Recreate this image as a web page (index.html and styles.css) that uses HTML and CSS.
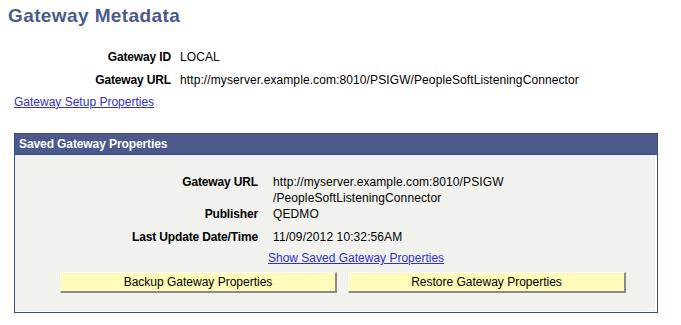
FILE: index.html
```html
<!DOCTYPE html>
<html lang="en">

<head>
    <meta charset="UTF-8">
    <title>Gateway Metadata</title>
    <link rel="stylesheet" href="styles.css">
</head>

<body>
    <div class="page">
        <h1 class="page-title">Gateway Metadata</h1>

        <div class="fields">
            <div class="label">Gateway ID</div>
            <div class="value">LOCAL</div>
            <div class="label">Gateway URL</div>
            <div class="value">http://myserver.example.com:8010/PSIGW/PeopleSoftListeningConnector</div>
        </div>

        <a class="link setup-link" href="#">Gateway Setup Properties</a>

        <div class="panel">
            <div class="panel-header">Saved Gateway Properties</div>
            <div class="panel-body">
                <div class="saved-fields">
                    <div class="label">Gateway URL</div>
                    <div class="value">http://myserver.example.com:8010/PSIGW<br>/PeopleSoftListeningConnector</div>
                    <div class="label">Publisher</div>
                    <div class="value">QEDMO</div>
                    <div class="label row-gap">Last Update Date/Time</div>
                    <div class="value row-gap">11/09/2012 10:32:56AM</div>
                    <div></div>
                    <div class="link-cell"><a class="link" href="#">Show Saved Gateway Properties</a></div>
                </div>
                <div class="buttons">
                    <button class="btn btn-backup" type="button">Backup Gateway Properties</button>
                    <button class="btn btn-restore" type="button">Restore Gateway Properties</button>
                </div>
            </div>
        </div>
    </div>
</body>

</html>
```

FILE: styles.css
```css
body {
    margin: 0;
    background-color: #ffffff;
    font-family: "Liberation Sans", Arial, sans-serif;
    font-size: 12px;
    color: #000;
}

.page {
    padding: 0 8px;
}

.page-title {
    margin: 0;
    padding-top: 5px;
    font-size: 19px;
    line-height: 22px;
    font-weight: bold;
    letter-spacing: 0.4px;
    color: #4b5a8c;
}

.fields {
    display: grid;
    grid-template-columns: 163px auto;
    column-gap: 9px;
    row-gap: 7px;
    margin-top: 22px;
    line-height: 16px;
}

.label {
    text-align: right;
    font-weight: bold;
    letter-spacing: -0.15px;
}

.value {
    letter-spacing: 0.1px;
}

.link {
    color: #3030cc;
    text-decoration: underline;
}

.setup-link {
    display: inline-block;
    margin-top: 6px;
    margin-left: 6px;
    line-height: 16px;
}

.panel {
    margin-top: 23px;
    margin-left: 6px;
    width: 642px;
    border: 1px solid #3a4a86;
}

.panel-header {
    height: 20px;
    line-height: 20px;
    padding-left: 4px;
    background-color: #4b5a8b;
    color: #ffffff;
    font-weight: bold;
    letter-spacing: -0.1px;
    border-bottom: 1px solid #3a4a86;
}

.panel-body {
    background-color: #f1f2ee;
    border-right: 2px solid #ffffff;
    border-bottom: 1px solid #ffffff;
    padding: 19px 0 18px 0;
}

.saved-fields {
    display: grid;
    grid-template-columns: 243px auto;
    column-gap: 15px;
    line-height: 16px;
}

.row-gap {
    margin-top: 7px;
}

.link-cell {
    margin-top: 5px;
    margin-left: -5px;
}

.buttons {
    display: flex;
    gap: 11px;
    margin-top: 6px;
    margin-left: 45px;
}

.btn {
    height: 21px;
    padding: 0;
    background-color: #fffbb8;
    border-top: 1px solid #ffffff;
    border-left: 1px solid #ffffff;
    border-right: 2px solid #8a8a86;
    border-bottom: 2px solid #8a8a86;
    font-family: "Liberation Sans", Arial, sans-serif;
    font-size: 12px;
    color: #000;
    cursor: pointer;
}

.btn-backup {
    width: 277px;
}

.btn-restore {
    width: 278px;
}
```
